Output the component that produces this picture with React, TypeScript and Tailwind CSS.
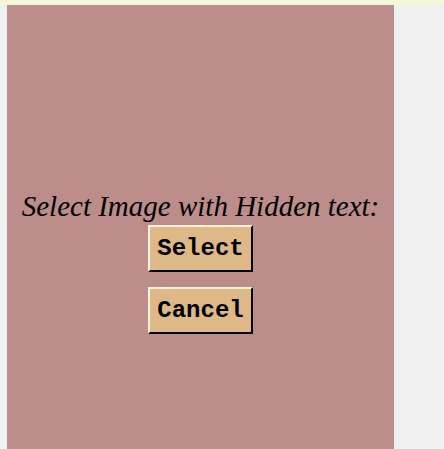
export default function App() {
  return (
    <div className="min-h-screen bg-[#f0f0f0]">
      <div className="h-[5px] bg-[#f2f8dc]" />
      <div className="ml-[7px] flex h-[444px] w-[387px] flex-col items-center bg-[#bc8d8b] pt-[183px]">
        <p className="text-[29px] italic leading-[36px] text-black [font-family:'Liberation_Serif',serif]">
          Select Image with Hidden text:
        </p>
        <button className="mt-[1px] h-[47px] w-[105px] border-2 border-t-[#fff4d8] border-l-[#fff4d8] border-r-black border-b-black bg-[#deb887] text-[24px] font-bold text-black [font-family:'Liberation_Mono',monospace]">
          Select
        </button>
        <button className="mt-[15px] h-[47px] w-[105px] border-2 border-t-[#fff4d8] border-l-[#fff4d8] border-r-black border-b-black bg-[#deb887] text-[24px] font-bold text-black [font-family:'Liberation_Mono',monospace]">
          Cancel
        </button>
      </div>
    </div>
  );
}
